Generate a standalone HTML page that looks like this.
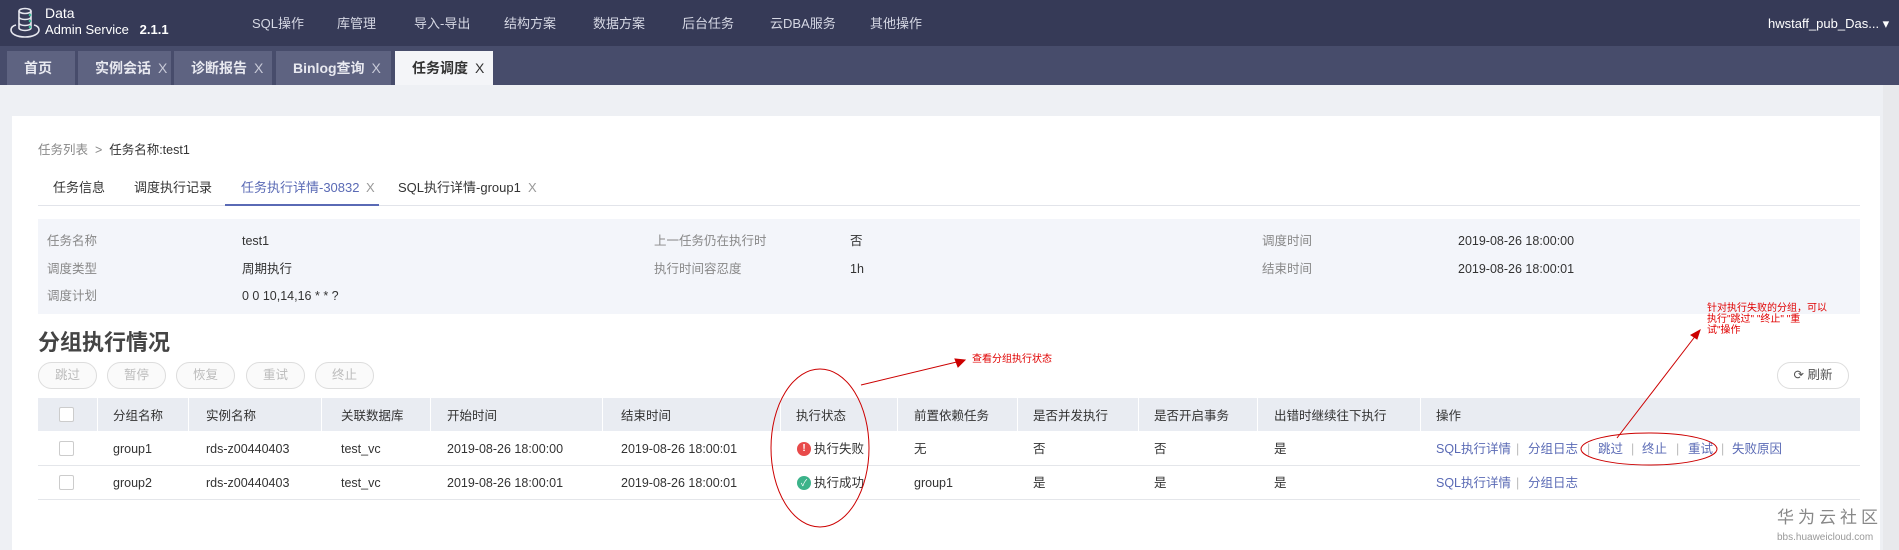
<!DOCTYPE html>
<html><head><meta charset="utf-8"><style>
*{margin:0;padding:0;box-sizing:border-box}
body{width:1899px;height:550px;overflow:hidden;background:#eef0f4;font-family:"Liberation Sans","Noto Sans CJK SC",sans-serif;font-size:12.5px;color:#333;position:relative}
.a{position:absolute;white-space:nowrap;line-height:16px}
.nav{position:absolute;left:0;top:0;width:1899px;height:46px;background:#363a57}
.nav .m{color:#d6d8e4;font-size:13px;top:16px}
.tabbar{position:absolute;left:0;top:46px;width:1899px;height:39px;background:#474c6b}
.tab{position:absolute;top:5px;height:34px;background:#5e6381;color:#e8e9f0;font-size:14px;font-weight:bold;line-height:34px;padding-left:17px;white-space:nowrap}
.tab span{font-weight:normal;color:#c8cad8;margin-left:7px}
.card{position:absolute;left:12px;top:116px;width:1868px;height:434px;background:#fff}
.lbl{color:#888}
.pill{position:absolute;top:362px;height:27px;border:1px solid #ddd;border-radius:14px;color:#bbb;font-size:12.5px;line-height:25px;text-align:center;background:#fafafa}
.cb{position:absolute;left:59px;width:15px;height:15px;border:1px solid #ccc;background:#fff;border-radius:2px}
.lk{color:#5a6ab5}
.sep{color:#bbb}
.red{color:#e00000}
.vs{position:absolute;top:398px;width:1px;height:33px;background:#fff}
.ic{display:inline-block;width:14px;height:14px;border-radius:50%;color:#fff;font-size:10px;text-align:center;line-height:14px;vertical-align:top;margin-top:1px;margin-right:3px}
</style></head><body>
<div class="nav">
<svg class="a" style="left:9px;top:6px" width="32" height="34" viewBox="0 0 32 34" fill="none" stroke="#e6e7ef" stroke-width="1.6"><ellipse cx="16" cy="5" rx="6" ry="2.5"/><path d="M10 5v17c0 1.5 3 2.5 6 2.5s6-1 6-2.5V5M10 11c0 1.5 3 2.5 6 2.5s6-1 6-2.5M10 17c0 1.5 3 2.5 6 2.5s6-1 6-2.5"/><path d="M7 19c-4 1-5 3-5 5 0 4 6 7 14 7s14-3 14-7c0-2-1-4-5-5"/><circle cx="21" cy="9" r="1.3" fill="#3cc29b" stroke="none"/><circle cx="21" cy="15" r="1.3" fill="#3cc29b" stroke="none"/><circle cx="21" cy="21" r="1.3" fill="#3cc29b" stroke="none"/></svg>
<div class="a" style="left:45px;top:5px;color:#fff;font-size:14px">Data</div>
<div class="a" style="left:45px;top:22px;color:#fff;font-size:13px">Admin Service &nbsp;&nbsp;<b>2.1.1</b></div>
<div class="a m" style="left:252px">SQL操作</div>
<div class="a m" style="left:337px">库管理</div>
<div class="a m" style="left:414px">导入-导出</div>
<div class="a m" style="left:504px">结构方案</div>
<div class="a m" style="left:593px">数据方案</div>
<div class="a m" style="left:682px">后台任务</div>
<div class="a m" style="left:770px">云DBA服务</div>
<div class="a m" style="left:870px">其他操作</div>
<div class="a" style="left:1768px;top:16px;color:#fff;font-size:13px">hwstaff_pub_Das... ▾</div>
</div>
<div class="tabbar">
<div class="tab" style="left:7px;width:68px">首页</div>
<div class="tab" style="left:78px;width:93px">实例会话<span>X</span></div>
<div class="tab" style="left:174px;width:98px">诊断报告<span>X</span></div>
<div class="tab" style="left:276px;width:115px">Binlog查询<span>X</span></div>
<div class="tab" style="left:395px;width:98px;background:#f4f5f8;color:#333">任务调度<span style="color:#333">X</span></div>
</div>
<div style="position:absolute;left:1883px;top:85px;width:16px;height:465px;background:#e8e9ec"></div>
<div class="card"></div>
<div class="a lbl" style="left:38px;top:142px">任务列表 &nbsp;&gt;&nbsp; <span style="color:#333">任务名称:test1</span></div>
<div class="a" style="left:53px;top:180px;font-size:13px">任务信息</div>
<div class="a" style="left:134px;top:180px;font-size:13px">调度执行记录</div>
<div class="a" style="left:241px;top:180px;font-size:13px;color:#5a6ab5">任务执行详情-30832</div>
<div class="a" style="left:366px;top:180px;font-size:13px;color:#999">X</div>
<div class="a" style="left:398px;top:180px;font-size:13px">SQL执行详情-group1</div>
<div class="a" style="left:528px;top:180px;font-size:13px;color:#999">X</div>
<div style="position:absolute;left:38px;top:205px;width:1822px;height:1px;background:#e2e4ea"></div>
<div style="position:absolute;left:225px;top:204px;width:154px;height:2px;background:#5a6ab5"></div>
<div style="position:absolute;left:38px;top:219px;width:1822px;height:95px;background:#f3f5fa"></div>
<div class="a lbl" style="left:47px;top:233px">任务名称</div><div class="a" style="left:242px;top:233px">test1</div>
<div class="a lbl" style="left:47px;top:261px">调度类型</div><div class="a" style="left:242px;top:261px">周期执行</div>
<div class="a lbl" style="left:47px;top:288px">调度计划</div><div class="a" style="left:242px;top:288px">0 0 10,14,16 * * ?</div>
<div class="a lbl" style="left:654px;top:233px">上一任务仍在执行时</div><div class="a" style="left:850px;top:233px">否</div>
<div class="a lbl" style="left:654px;top:261px">执行时间容忍度</div><div class="a" style="left:850px;top:261px">1h</div>
<div class="a lbl" style="left:1262px;top:233px">调度时间</div><div class="a" style="left:1458px;top:233px">2019-08-26 18:00:00</div>
<div class="a lbl" style="left:1262px;top:261px">结束时间</div><div class="a" style="left:1458px;top:261px">2019-08-26 18:00:01</div>
<div class="a" style="left:38px;top:330px;font-size:22px;line-height:26px;font-weight:bold;color:#444">分组执行情况</div>
<div class="pill" style="left:38px;width:59px">跳过</div>
<div class="pill" style="left:107px;width:59px">暂停</div>
<div class="pill" style="left:176px;width:59px">恢复</div>
<div class="pill" style="left:246px;width:59px">重试</div>
<div class="pill" style="left:315px;width:59px">终止</div>
<div class="pill" style="left:1777px;width:72px;color:#555;background:#fff">⟳ 刷新</div>
<div style="position:absolute;left:38px;top:398px;width:1822px;height:33px;background:#e9ecf2"></div>
<div class="vs" style="left:97px"></div><div class="vs" style="left:188px"></div><div class="vs" style="left:321px"></div><div class="vs" style="left:430px"></div><div class="vs" style="left:602px"></div><div class="vs" style="left:780px"></div><div class="vs" style="left:897px"></div><div class="vs" style="left:1017px"></div><div class="vs" style="left:1138px"></div><div class="vs" style="left:1257px"></div><div class="vs" style="left:1420px"></div>
<div style="position:absolute;left:38px;top:465px;width:1822px;height:1px;background:#e4e6ea"></div>
<div style="position:absolute;left:38px;top:499px;width:1822px;height:1px;background:#e4e6ea"></div>
<div class="cb" style="top:407px"></div><div class="cb" style="top:441px"></div><div class="cb" style="top:475px"></div>
<div class="a" style="left:113px;top:408px">分组名称</div>
<div class="a" style="left:206px;top:408px">实例名称</div>
<div class="a" style="left:341px;top:408px">关联数据库</div>
<div class="a" style="left:447px;top:408px">开始时间</div>
<div class="a" style="left:621px;top:408px">结束时间</div>
<div class="a" style="left:796px;top:408px">执行状态</div>
<div class="a" style="left:914px;top:408px">前置依赖任务</div>
<div class="a" style="left:1033px;top:408px">是否并发执行</div>
<div class="a" style="left:1154px;top:408px">是否开启事务</div>
<div class="a" style="left:1274px;top:408px">出错时继续往下执行</div>
<div class="a" style="left:1436px;top:408px">操作</div>
<div class="a" style="left:113px;top:441px">group1</div><div class="a" style="left:206px;top:441px">rds-z00440403</div><div class="a" style="left:341px;top:441px">test_vc</div><div class="a" style="left:447px;top:441px">2019-08-26 18:00:00</div><div class="a" style="left:621px;top:441px">2019-08-26 18:00:01</div>
<div class="a" style="left:797px;top:441px"><span class="ic" style="background:#e84a4a;font-weight:bold">!</span>执行失败</div>
<div class="a" style="left:914px;top:441px">无</div><div class="a" style="left:1033px;top:441px">否</div><div class="a" style="left:1154px;top:441px">否</div><div class="a" style="left:1274px;top:441px">是</div>
<div class="a lk" style="left:1436px;top:441px">SQL执行详情</div><div class="a sep" style="left:1516px;top:441px">|</div>
<div class="a lk" style="left:1528px;top:441px">分组日志</div><div class="a sep" style="left:1587px;top:441px">|</div>
<div class="a lk" style="left:1598px;top:441px">跳过</div><div class="a sep" style="left:1631px;top:441px">|</div>
<div class="a lk" style="left:1642px;top:441px">终止</div><div class="a sep" style="left:1676px;top:441px">|</div>
<div class="a lk" style="left:1688px;top:441px">重试</div><div class="a sep" style="left:1721px;top:441px">|</div>
<div class="a lk" style="left:1732px;top:441px">失败原因</div>
<div class="a" style="left:113px;top:475px">group2</div><div class="a" style="left:206px;top:475px">rds-z00440403</div><div class="a" style="left:341px;top:475px">test_vc</div><div class="a" style="left:447px;top:475px">2019-08-26 18:00:01</div><div class="a" style="left:621px;top:475px">2019-08-26 18:00:01</div>
<div class="a" style="left:797px;top:475px"><span class="ic" style="background:#3cb38a;font-size:9px">✓</span>执行成功</div>
<div class="a" style="left:914px;top:475px">group1</div><div class="a" style="left:1033px;top:475px">是</div><div class="a" style="left:1154px;top:475px">是</div><div class="a" style="left:1274px;top:475px">是</div>
<div class="a lk" style="left:1436px;top:475px">SQL执行详情</div><div class="a sep" style="left:1516px;top:475px">|</div>
<div class="a lk" style="left:1528px;top:475px">分组日志</div>
<svg class="a" style="left:0;top:0" width="1899" height="550" fill="none" stroke="#c00" stroke-width="1">
<ellipse cx="820" cy="448" rx="49" ry="79"/>
<ellipse cx="1649" cy="449" rx="68" ry="16"/>
<path d="M861 385L965 360"/><path d="M965 360l-10-1l3 8z" fill="#c00"/>
<path d="M1617 438L1700 330"/><path d="M1700 330l-9 5l6 4z" fill="#c00"/>
</svg>
<div class="a red" style="left:972px;top:352px;font-size:10px">查看分组执行状态</div>
<div class="a red" style="left:1707px;top:303px;font-size:10px;line-height:11px">针对执行失败的分组，可以<br>执行"跳过" "终止" "重<br>试"操作</div>
<div class="a" style="left:1777px;top:508px;font-size:17px;line-height:20px;color:#888;letter-spacing:4px">华为云社区</div>
<div class="a" style="left:1777px;top:530px;font-size:10px;color:#999">bbs.huaweicloud.com</div>
</body></html>
